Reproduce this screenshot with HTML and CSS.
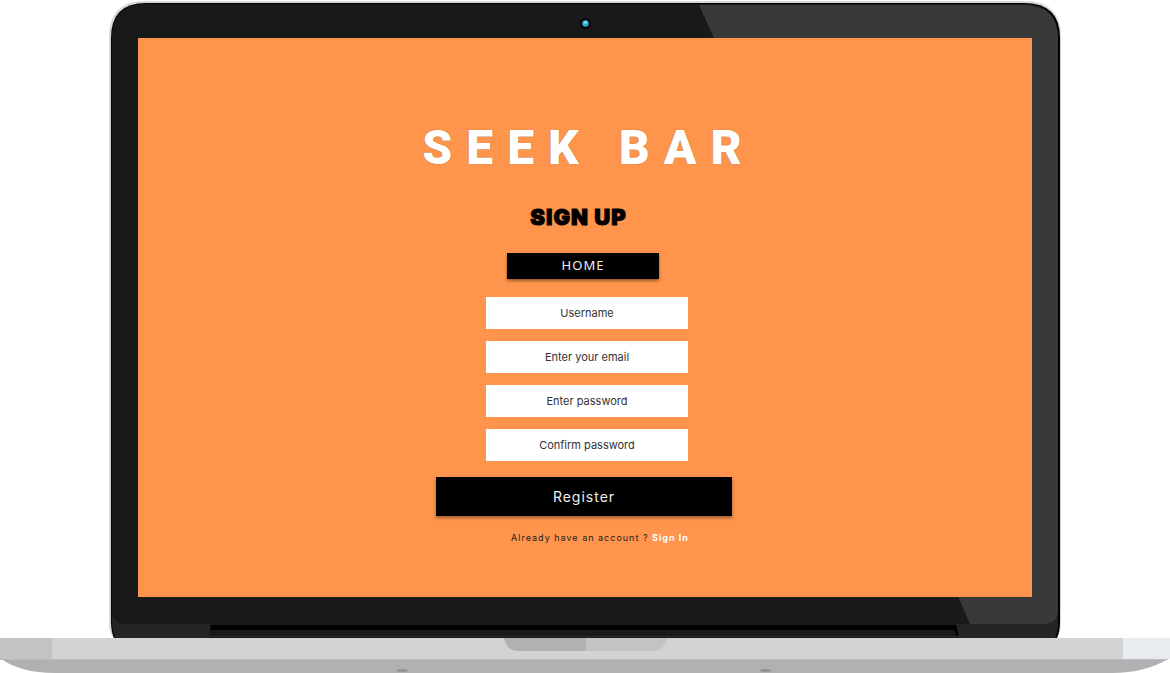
FILE: index.html
```html
<!DOCTYPE html>
<html lang="en">
<head>
<meta charset="utf-8">
<meta name="viewport" content="width=device-width, initial-scale=1">
<title>Seek Bar - Sign up</title>
<link rel="stylesheet" href="styles.css">
</head>
<body>
<div class="laptop">
  <svg class="laptop-frame" viewBox="0 0 1170 673" preserveAspectRatio="none" aria-hidden="true">
    <!-- lid -->
    <path d="M113 638Q109 632 109 622V37Q109 1 145 1H1025Q1061 1 1061 37V622Q1061 632 1057 638Z" fill="#d5d7d8"/>
    <path d="M114 638Q111 631 111 622V38Q111 3 146 3H1024Q1060 3 1060 38V622Q1060 631 1057 638Z" fill="#030303"/>
    <path d="M116 638Q112 631 112 622V39Q112 4 147 4H1023Q1058 4 1058 39V622Q1058 631 1055 638Z" fill="#242424"/>
    <path d="M112 39Q112 4 147 4H1023Q1058 4 1058 39V610Q1058 624 1044 624H126Q112 624 112 610Z" fill="#191919"/>
    <path d="M699 5H1023Q1058 5 1058 39V610Q1058 624 1044 624H970L958 596L714 38Z" fill="#393939"/>
    <!-- hinge -->
    <path d="M211 624H956L959 638H209Z" fill="#191919"/>
    <path d="M211 625H956L959 637H957L954 630H210Z" fill="#020202"/>
    <path d="M113 636.500H1056" stroke="#302828"/>
    <!-- camera -->
    <circle cx="585.500" cy="23.500" r="5.500" fill="#080808"/>
    <circle cx="585.500" cy="23.500" r="3.300" fill="#2fa8d0"/>
    <circle cx="585.500" cy="22.500" r="1.200" fill="#a5edf7"/>
    <!-- base -->
    <path d="M0 658H1170Q1145 673 1112 673H55Q20 673 0 658Z" fill="#b1b1b3"/>
    <path d="M0 638H1170V659H0Z" fill="#d1d3d4"/>
    <path d="M0 638H52V659H0Z" fill="#c3c3c5"/>
    <path d="M1123 638H1170V659H1123Z" fill="#e8ebf0"/>
    <path d="M0 659.500H1168" stroke="#bcbcbe"/>
    <path d="M504 638H586V651H518Q507 651 504 638Z" fill="#b1b1b3"/>
    <path d="M586 638H667Q664 651 653 651H586Z" fill="#c3c3c5"/>
    <ellipse cx="402" cy="670.500" rx="6" ry="1.500" fill="#929294"/>
    <ellipse cx="765.500" cy="670.500" rx="6" ry="1.500" fill="#929294"/>
  </svg>
  <main class="screen">
    <h1 class="brand">SEEK BAR</h1>
    <h2 class="heading">SIGN UP</h2>
    <button class="button button-home" type="button">HOME</button>
    <form class="form">
      <input class="field" type="text" placeholder="Username" aria-label="Username">
      <input class="field" type="email" placeholder="Enter your email" aria-label="Enter your email">
      <input class="field" type="password" placeholder="Enter password" aria-label="Enter password">
      <input class="field" type="password" placeholder="Confirm password" aria-label="Confirm password">
      <button class="button button-register" type="submit">Register</button>
    </form>
    <p class="account">Already have an account ? <a class="signin" href="#">Sign In</a></p>
  </main>
</div>
</body>
</html>
```
FILE: styles.css
```css
* {
  box-sizing: border-box;
}

body {
  margin: 0;
  background: #fff;
  font-family: Inter, sans-serif;
}

.laptop {
  display: grid;
  min-height: 100vh;
}

.laptop-frame,
.screen {
  grid-area: 1 / 1;
}

.laptop-frame {
  display: block;
  width: 100%;
  height: 100%;
}

.screen {
  display: flex;
  flex-direction: column;
  align-items: center;
  margin: 38px 11.8% 76px;
  padding: 80px 16px 48px;
  background: #ff954c;
}

.brand {
  margin: 0;
  padding-left: 8px;
  color: #fff;
  font: 900 48px/60px Roboto, sans-serif;
  letter-spacing: 14px;
  text-shadow: 0 0 1px rgba(0, 0, 0, 0.4);
}

.heading {
  margin: 27px 13px 0 0;
  color: #000;
  font: 900 22px/24px Inter, sans-serif;
  letter-spacing: 1px;
  -webkit-text-stroke: 1px #000;
}

.button {
  border: 0;
  padding: 0;
  background: #000;
  color: #eee;
  box-shadow: 0 2px 3px rgba(0, 0, 0, 0.4);
}

.button-home {
  width: 152px;
  height: 26px;
  margin: 24px 4px 0 0;
  padding-bottom: 2px;
  font: 13px/24px "Noto Sans", sans-serif;
  letter-spacing: 1px;
}

.form {
  display: flex;
  flex-direction: column;
  align-items: center;
  gap: 12px;
  margin-top: 18px;
}

.field {
  width: 202px;
  height: 32px;
  margin-left: 4px;
  border: 0;
  padding: 0 8px;
  background: #fff;
  color: #333;
  font: 11px/16px Inter, sans-serif;
  text-align: center;
}

.field::placeholder {
  color: #333;
  opacity: 1;
}

.button-register {
  width: 296px;
  height: 39px;
  margin: 4px 2px 0 0;
  font: 14px/20px Inter, sans-serif;
  letter-spacing: 1px;
}

.account {
  margin: 14px 0 0 30px;
  color: #222;
  font: 9px/16px Inter, sans-serif;
  letter-spacing: 1px;
}

.signin {
  color: #fff;
  font-weight: 700;
  text-decoration: none;
}
```
